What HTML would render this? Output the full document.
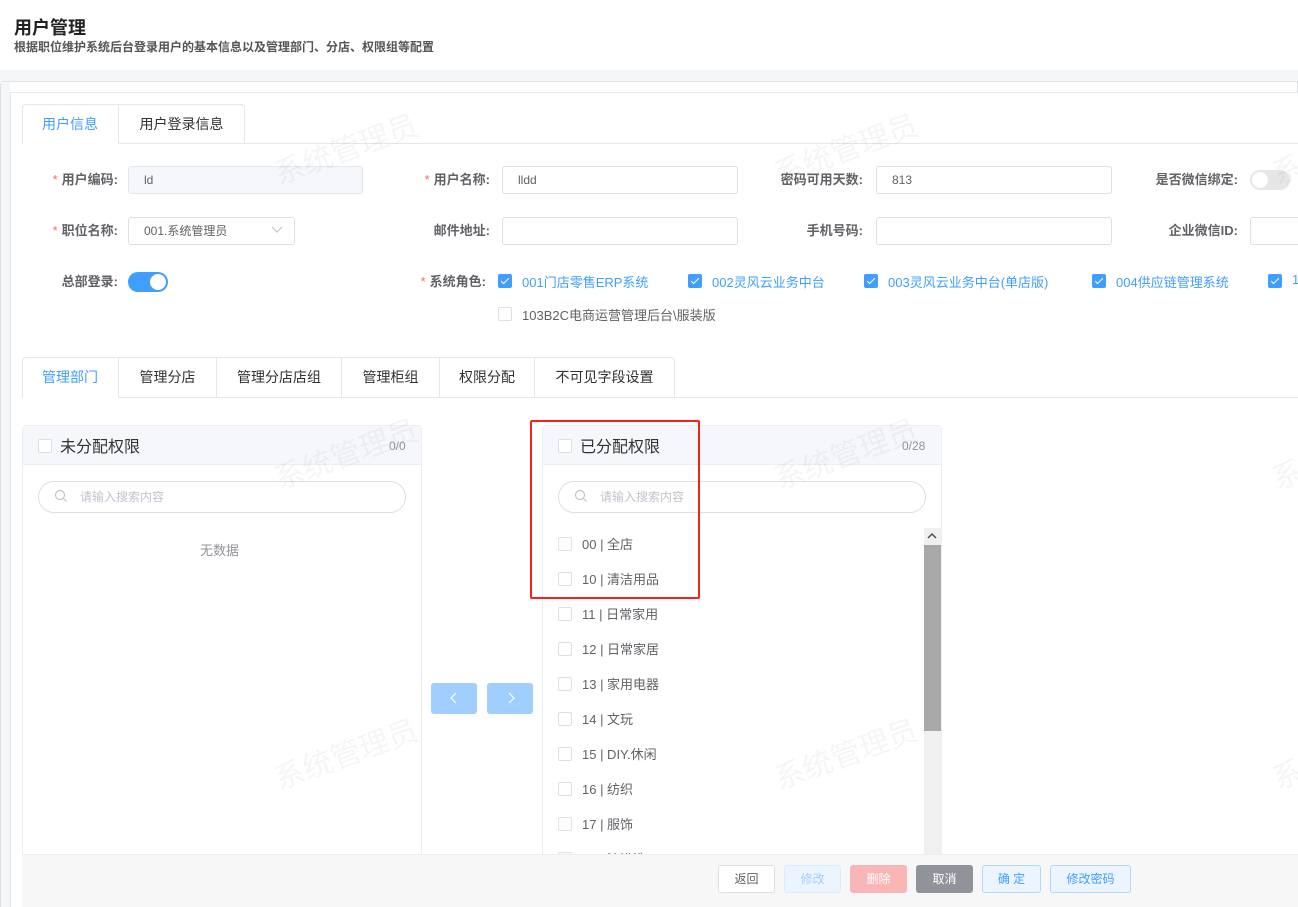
<!DOCTYPE html>
<html><head><meta charset="utf-8"><style>
*{box-sizing:border-box;margin:0;padding:0}
body{width:1298px;height:907px;overflow:hidden;background:#fff;font-family:"Liberation Sans","Noto Sans CJK SC",sans-serif;font-size:13px;color:#606266;position:relative}
.a{position:absolute}
.lbl{position:absolute;text-align:right;font-weight:bold;color:#606266;font-size:13px;line-height:27px}
.req{color:#f56c6c;font-weight:normal;margin-right:4px}
.inp{position:absolute;height:28px;border:1px solid #dcdfe6;border-radius:3px;background:#fff;padding-left:15px;line-height:26px;color:#606266;font-size:12px}
.cb{position:absolute;width:14px;height:14px;border:1px solid #dcdfe6;border-radius:2px;background:#fff}
.cb.on{background:#409eff;border-color:#409eff}
.cb.on:after{content:"";position:absolute;left:4px;top:1px;width:3px;height:7px;border:solid #fff;border-width:0 1px 1px 0;transform:rotate(45deg)}
.tab{position:absolute;height:40px;border-right:1px solid #e4e7ed;line-height:40px;text-align:center;font-size:14px;color:#303133}
.wm{position:absolute;font-size:30px;color:rgba(0,0,0,0.04);transform:rotate(-20deg);white-space:nowrap;pointer-events:none}
.btn{position:absolute;top:865px;height:28px;border:1px solid #dcdfe6;border-radius:3px;font-size:12px;line-height:26px;text-align:center}
.item{position:absolute;left:558px;font-size:13px;color:#606266}
.item .cb{left:0;top:1px}
.item span{position:absolute;left:24px;top:-2px;white-space:nowrap}
</style></head><body>
<div class="a" style="left:14px;top:14px;font-size:18px;font-weight:bold;color:#222">用户管理</div>
<div class="a" style="left:14px;top:38px;font-size:12px;font-weight:bold;color:#555">根据职位维护系统后台登录用户的基本信息以及管理部门、分店、权限组等配置</div>
<div class="a" style="left:0;top:70px;width:1298px;height:837px;background:#f5f6f8"></div>
<div class="a" style="left:0;top:81px;width:1298px;height:826px;background:#fff;border:1px solid #dde1e8;border-radius:4px 0 0 0"></div>
<div class="a" style="left:1px;top:82px;width:9px;height:825px;background:#f5f6f8"></div>
<div class="a" style="left:10px;top:92px;width:1288px;height:815px;background:#fff;border-left:1px solid #e4e7ed;border-top:1px solid #e4e7ed"></div>

<!-- tabs 1 -->
<div class="a" style="left:22px;top:143px;width:1276px;height:1px;background:#e4e7ed"></div>
<div class="a" style="left:22px;top:104px;width:223px;height:40px;border:1px solid #e4e7ed;border-bottom:none;border-radius:4px 4px 0 0"></div>
<div class="a" style="left:23px;top:143px;width:96px;height:1px;background:#fff"></div>
<div class="tab" style="left:22px;top:104px;width:97px;color:#409eff">用户信息</div>
<div class="tab" style="left:119px;top:104px;width:125px;border-right:none">用户登录信息</div>

<!-- row1 -->
<div class="lbl" style="left:20px;top:166px;width:98px"><span class="req">*</span>用户编码:</div>
<div class="inp" style="left:128px;top:166px;width:235px;background:#f5f7fa;border-color:#e4e7ed">ld</div>
<div class="lbl" style="left:390px;top:166px;width:100px"><span class="req">*</span>用户名称:</div>
<div class="inp" style="left:502px;top:166px;width:236px">lldd</div>
<div class="lbl" style="left:760px;top:166px;width:103px">密码可用天数:</div>
<div class="inp" style="left:876px;top:166px;width:236px">813</div>
<div class="lbl" style="left:1120px;top:166px;width:118px">是否微信绑定:</div>
<div class="a" style="left:1250px;top:170px;width:40px;height:20px;border-radius:10px;background:#e6e6e6"><div class="a" style="left:2px;top:2px;width:16px;height:16px;border-radius:50%;background:#fff"></div></div>

<!-- row2 -->
<div class="lbl" style="left:20px;top:217px;width:98px"><span class="req">*</span>职位名称:</div>
<div class="inp" style="left:128px;top:217px;width:167px">001.系统管理员</div>
<svg class="a" style="left:271px;top:226px" width="12" height="8"><path d="M1 1 L6 6 L11 1" fill="none" stroke="#c0c4cc" stroke-width="1.2"/></svg>
<div class="lbl" style="left:390px;top:217px;width:100px">邮件地址:</div>
<div class="inp" style="left:502px;top:217px;width:236px"></div>
<div class="lbl" style="left:760px;top:217px;width:103px">手机号码:</div>
<div class="inp" style="left:876px;top:217px;width:236px"></div>
<div class="lbl" style="left:1120px;top:217px;width:118px">企业微信ID:</div>
<div class="inp" style="left:1250px;top:217px;width:60px"></div>

<!-- row3 -->
<div class="lbl" style="left:20px;top:268px;width:98px">总部登录:</div>
<div class="a" style="left:128px;top:272px;width:40px;height:20px;border-radius:10px;background:#409eff"><div class="a" style="left:22px;top:2px;width:16px;height:16px;border-radius:50%;background:#fff"></div></div>
<div class="lbl" style="left:390px;top:268px;width:96px"><span class="req">*</span>系统角色:</div>
<div class="cb on" style="left:498px;top:274px"></div><div class="a" style="left:522px;top:272px;color:#409eff">001门店零售ERP系统</div>
<div class="cb on" style="left:688px;top:274px"></div><div class="a" style="left:712px;top:272px;color:#409eff">002灵风云业务中台</div>
<div class="cb on" style="left:864px;top:274px"></div><div class="a" style="left:888px;top:272px;color:#409eff">003灵风云业务中台(单店版)</div>
<div class="cb on" style="left:1092px;top:274px"></div><div class="a" style="left:1116px;top:272px;color:#409eff">004供应链管理系统</div>
<div class="cb on" style="left:1268px;top:274px"></div><div class="a" style="left:1292px;top:272px;color:#409eff">1</div>
<div class="cb" style="left:498px;top:307px"></div><div class="a" style="left:522px;top:305px">103B2C电商运营管理后台\服装版</div>

<!-- tabs 2 -->
<div class="a" style="left:22px;top:397px;width:1276px;height:1px;background:#e4e7ed"></div>
<div class="a" style="left:22px;top:357px;width:653px;height:41px;border:1px solid #e4e7ed;border-bottom:none;border-radius:4px 4px 0 0"></div>
<div class="a" style="left:23px;top:397px;width:96px;height:1px;background:#fff"></div>
<div class="tab" style="left:22px;top:357px;width:97px;color:#409eff;height:41px">管理部门</div>
<div class="tab" style="left:119px;top:357px;width:98px">管理分店</div>
<div class="tab" style="left:217px;top:357px;width:125px">管理分店店组</div>
<div class="tab" style="left:342px;top:357px;width:98px">管理柜组</div>
<div class="tab" style="left:440px;top:357px;width:95px">权限分配</div>
<div class="tab" style="left:535px;top:357px;width:139px;border-right:none">不可见字段设置</div>

<!-- left panel -->
<div class="a" style="left:22px;top:425px;width:400px;height:440px;border:1px solid #ebeef5;border-radius:4px"></div>
<div class="a" style="left:23px;top:426px;width:398px;height:39px;background:#f5f7fa;border-bottom:1px solid #ebeef5"></div>
<div class="cb" style="left:38px;top:439px"></div>
<div class="a" style="left:60px;top:433px;font-size:16px;color:#303133">未分配权限</div>
<div class="a" style="left:389px;top:439px;font-size:12px;color:#909399">0/0</div>
<div class="a" style="left:38px;top:481px;width:368px;height:32px;border:1px solid #dcdfe6;border-radius:16px"></div>
<svg class="a" style="left:54px;top:489px" width="14" height="14"><circle cx="6" cy="6" r="4.5" fill="none" stroke="#c0c4cc" stroke-width="1.2"/><path d="M9.5 9.5 L12.5 12.5" stroke="#c0c4cc" stroke-width="1.2"/></svg>
<div class="a" style="left:80px;top:488px;font-size:12px;color:#c0c4cc">请输入搜索内容</div>
<div class="a" style="left:200px;top:540px;color:#909399">无数据</div>

<!-- arrows -->
<div class="a" style="left:431px;top:683px;width:46px;height:31px;background:#a0cfff;border-radius:3px"></div>
<svg class="a" style="left:449px;top:692px" width="10" height="12"><path d="M7 1 L2 6 L7 11" fill="none" stroke="#fff" stroke-width="1.2"/></svg>
<div class="a" style="left:487px;top:683px;width:46px;height:31px;background:#a0cfff;border-radius:3px"></div>
<svg class="a" style="left:506px;top:692px" width="10" height="12"><path d="M3 1 L8 6 L3 11" fill="none" stroke="#fff" stroke-width="1.2"/></svg>

<!-- right panel -->
<div class="a" style="left:542px;top:425px;width:400px;height:440px;border:1px solid #ebeef5;border-radius:4px"></div>
<div class="a" style="left:543px;top:426px;width:398px;height:39px;background:#f5f7fa;border-bottom:1px solid #ebeef5"></div>
<div class="cb" style="left:558px;top:439px"></div>
<div class="a" style="left:580px;top:433px;font-size:16px;color:#303133">已分配权限</div>
<div class="a" style="left:902px;top:439px;font-size:12px;color:#909399">0/28</div>
<div class="a" style="left:558px;top:481px;width:368px;height:32px;border:1px solid #dcdfe6;border-radius:16px"></div>
<svg class="a" style="left:574px;top:489px" width="14" height="14"><circle cx="6" cy="6" r="4.5" fill="none" stroke="#c0c4cc" stroke-width="1.2"/><path d="M9.5 9.5 L12.5 12.5" stroke="#c0c4cc" stroke-width="1.2"/></svg>
<div class="a" style="left:600px;top:488px;font-size:12px;color:#c0c4cc">请输入搜索内容</div>
<div class="a" style="left:924px;top:528px;width:17px;height:330px;background:#f0f0f0"></div>
<div class="a" style="left:924px;top:545px;width:17px;height:186px;background:#a8a8a8"></div>
<svg class="a" style="left:927px;top:532px" width="10" height="8"><path d="M1 6 L5 2 L9 6" fill="none" stroke="#505050" stroke-width="1.5"/></svg>

<div class="item" style="top:536px"><div class="cb"></div><span>00 | 全店</span></div>
<div class="item" style="top:571px"><div class="cb"></div><span>10 | 清洁用品</span></div>
<div class="item" style="top:606px"><div class="cb"></div><span>11 | 日常家用</span></div>
<div class="item" style="top:641px"><div class="cb"></div><span>12 | 日常家居</span></div>
<div class="item" style="top:676px"><div class="cb"></div><span>13 | 家用电器</span></div>
<div class="item" style="top:711px"><div class="cb"></div><span>14 | 文玩</span></div>
<div class="item" style="top:746px"><div class="cb"></div><span>15 | DIY.休闲</span></div>
<div class="item" style="top:781px"><div class="cb"></div><span>16 | 纺织</span></div>
<div class="item" style="top:816px"><div class="cb"></div><span>17 | 服饰</span></div>
<div class="item" style="top:851px"><div class="cb"></div><span>18 | 沐浴洗</span></div>

<div class="a" style="left:530px;top:420px;width:170px;height:179px;border:2px solid #f5221c;border-radius:2px"></div>

<!-- bottom bar -->
<div class="a" style="left:22px;top:854px;width:1276px;height:53px;background:#f7f7f7;border-top:1px solid #ebeef5"></div>
<div class="btn" style="left:718px;width:57px;background:#fff;color:#606266">返回</div>
<div class="btn" style="left:784px;width:57px;background:#ecf5ff;border-color:#d9ecff;color:#a0cfff">修改</div>
<div class="btn" style="left:850px;width:57px;background:#fab6b6;border-color:#fab6b6;color:#fff">删除</div>
<div class="btn" style="left:916px;width:57px;background:#909399;border-color:#909399;color:#fff">取消</div>
<div class="btn" style="left:982px;width:59px;background:#ecf5ff;border-color:#b3d8ff;color:#409eff">确 定</div>
<div class="btn" style="left:1050px;width:81px;background:#ecf5ff;border-color:#b3d8ff;color:#409eff">修改密码</div>

<!-- watermarks -->
<div class="wm" style="left:270px;top:125px">系统管理员</div>
<div class="wm" style="left:770px;top:125px">系统管理员</div>
<div class="wm" style="left:1268px;top:125px">系统管理员</div>
<div class="wm" style="left:270px;top:430px">系统管理员</div>
<div class="wm" style="left:770px;top:430px">系统管理员</div>
<div class="wm" style="left:1268px;top:430px">系统管理员</div>
<div class="wm" style="left:270px;top:730px">系统管理员</div>
<div class="wm" style="left:770px;top:730px">系统管理员</div>
<div class="wm" style="left:1268px;top:730px">系统管理员</div>
</body></html>
